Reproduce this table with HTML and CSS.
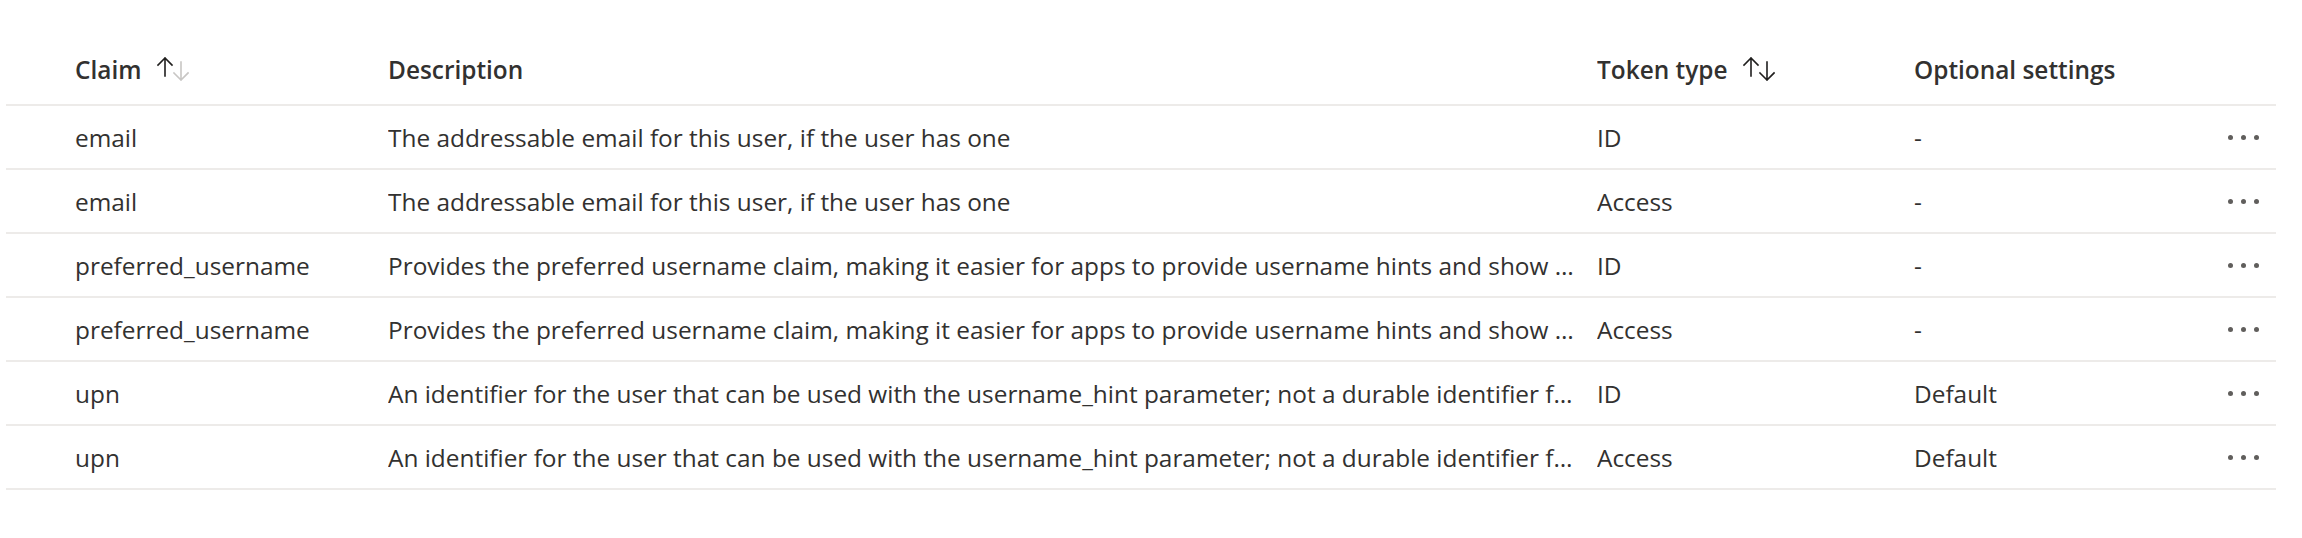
FILE: index.html
```html
<!DOCTYPE html>
<html lang="en">
<head>
<meta charset="utf-8">
<title>Claims</title>
<link rel="stylesheet" href="styles.css">
</head>
<body>
<div class="table">
  <div class="row head">
    <div class="cell hcell">Claim
      <svg class="sort" width="32" height="24" viewBox="0 0 32 24" aria-hidden="true">
        <path class="on" d="M8 19V1M1 8l7-7 7 7"/>
        <path class="off" d="M24 5v18M17 16l7 7 7-7"/>
      </svg>
    </div>
    <div class="cell hcell">Description</div>
    <div class="cell hcell">Token type
      <svg class="sort" width="32" height="24" viewBox="0 0 32 24" aria-hidden="true">
        <path class="on" d="M8 19V1M1 8l7-7 7 7"/>
        <path class="on" d="M24 5v18M17 16l7 7 7-7"/>
      </svg>
    </div>
    <div class="cell hcell">Optional settings</div>
    <div class="cell"></div>
  </div>
  <div class="row">
    <div class="cell">email</div>
    <div class="cell desc">The addressable email for this user, if the user has one</div>
    <div class="cell">ID</div>
    <div class="cell">-</div>
    <div class="cell more"><i></i><i></i><i></i></div>
  </div>
  <div class="row">
    <div class="cell">email</div>
    <div class="cell desc">The addressable email for this user, if the user has one</div>
    <div class="cell">Access</div>
    <div class="cell">-</div>
    <div class="cell more"><i></i><i></i><i></i></div>
  </div>
  <div class="row">
    <div class="cell">preferred_username</div>
    <div class="cell desc">Provides the preferred username claim, making it easier for apps to provide username hints and show human readable usernames</div>
    <div class="cell">ID</div>
    <div class="cell">-</div>
    <div class="cell more"><i></i><i></i><i></i></div>
  </div>
  <div class="row">
    <div class="cell">preferred_username</div>
    <div class="cell desc">Provides the preferred username claim, making it easier for apps to provide username hints and show human readable usernames</div>
    <div class="cell">Access</div>
    <div class="cell">-</div>
    <div class="cell more"><i></i><i></i><i></i></div>
  </div>
  <div class="row">
    <div class="cell">upn</div>
    <div class="cell desc">An identifier for the user that can be used with the username_hint parameter; not a durable identifier for the user</div>
    <div class="cell">ID</div>
    <div class="cell">Default</div>
    <div class="cell more"><i></i><i></i><i></i></div>
  </div>
  <div class="row">
    <div class="cell">upn</div>
    <div class="cell desc">An identifier for the user that can be used with the username_hint parameter; not a durable identifier for the user</div>
    <div class="cell">Access</div>
    <div class="cell">Default</div>
    <div class="cell more"><i></i><i></i><i></i></div>
  </div>
</div>
</body>
</html>
```
FILE: styles.css
```css
html, body {
  margin: 0;
  padding: 0;
  background: #ffffff;
}
body {
  font-family: "Open Sans", "Noto Sans", "Liberation Sans", sans-serif;
  font-size: 24.4px;
  color: #323130;
}
.table {
  margin: 34px 26px 0 6px;
  width: 2270px;
}
.row {
  display: grid;
  grid-template-columns: 313px 1209px 317px 313px 1fr;
  padding-left: 69px;
  height: 62px;
  align-items: center;
  border-bottom: 2px solid #edebe9;
}
.row.head {
  height: 70px;
  font-weight: 600;
}
.cell {
  white-space: nowrap;
  overflow: hidden;
}
.hcell {
  display: flex;
  align-items: center;
}
.desc {
  text-overflow: ellipsis;
  padding-right: 18px;
}
.sort {
  margin-left: 16px;
  flex: none;
  fill: none;
  stroke-width: 1.6;
  stroke-linecap: square;
}
.sort .on {
  stroke: #201f1e;
}
.sort .off {
  stroke: #c8c6c4;
}
.more {
  display: flex;
  gap: 8px;
  padding-left: 1px;
}
.more i {
  width: 5px;
  height: 5px;
  border-radius: 50%;
  background: #605e5c;
}
```
